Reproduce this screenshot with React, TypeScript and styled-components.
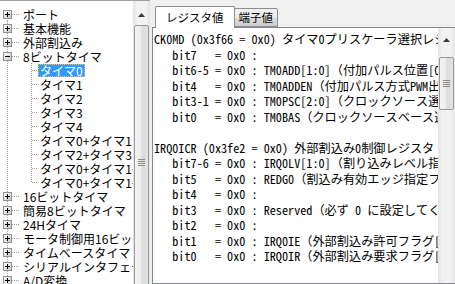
import React from "react";
import styled, { createGlobalStyle } from "styled-components";

const Global = createGlobalStyle`
  html, body { margin: 0; padding: 0; background: #f0f0f0; overflow: hidden; }
  #root { width: 455px; height: 284px; }
`;

const Frame = styled.div`
  width: 455px;
  height: 284px;
  display: flex;
  overflow: hidden;
  background: #f0f0f0;
`;

const TreePane = styled.div`
  width: 150px;
  height: 284px;
  flex: none;
  display: flex;
  background: #fff;
  border-top: 1px solid #a0a0a0;
  box-sizing: border-box;
  overflow: hidden;
`;

const TreeBody = styled.div`
  flex: 1;
  min-width: 0;
  padding-top: 6px;
  overflow: hidden;
  font-family: "Noto Sans CJK JP", sans-serif;
  font-size: 12px;
  color: #000;
`;

const Row = styled.div`
  height: 14px;
  display: flex;
  align-items: center;
  white-space: nowrap;
`;

const Label = styled.span<{ $sel?: boolean }>`
  height: 13px;
  line-height: 13px;
  padding: 0 2px;
  box-sizing: border-box;
  background: ${(p) => (p.$sel ? "#3399ff" : "transparent")};
  color: ${(p) => (p.$sel ? "#fff" : "#000")};
  outline: ${(p) => (p.$sel ? "1px dotted #f0c060" : "none")};
  outline-offset: -1px;
`;

const ScrollBar = styled.div`
  width: 17px;
  flex: none;
  display: flex;
  flex-direction: column;
  background: linear-gradient(to right, #e3e3e3, #f2f2f2 25%, #f2f2f2 75%, #e3e3e3);
  overflow: hidden;
`;

const ArrowBtn = styled.div<{ $h: number; $pt: number }>`
  height: ${(p) => p.$h}px;
  padding-top: ${(p) => p.$pt}px;
  box-sizing: border-box;
  flex: none;
  display: flex;
  align-items: flex-start;
  justify-content: center;
`;

const Thumb = styled.div<{ $h: number }>`
  flex: none;
  margin: 0 1px;
  height: ${(p) => p.$h}px;
  border: 1px solid #9a9a9a;
  border-radius: 2px;
  box-sizing: border-box;
  background: linear-gradient(to right, #f4f4f4, #ececec 45%, #dcdcdc 55%, #e2e2e2);
  display: flex;
  align-items: center;
  justify-content: center;
`;

const Splitter = styled.div`
  width: 2px;
  flex: none;
  background: #f0f0f0;
`;

const RightPane = styled.div`
  flex: 1;
  min-width: 0;
  display: flex;
  flex-direction: column;
`;

const TabStrip = styled.div`
  height: 27px;
  flex: none;
  display: flex;
  align-items: flex-end;
  padding-left: 3px;
  position: relative;
  z-index: 1;
`;

const Tab = styled.div<{ $active?: boolean }>`
  height: ${(p) => (p.$active ? 22 : 19)}px;
  margin-bottom: ${(p) => (p.$active ? -1 : 0)}px;
  padding: 0 ${(p) => (p.$active ? 10 : 4)}px;
  border: 1px solid #898c95;
  border-bottom: ${(p) => (p.$active ? "none" : "1px solid #898c95")};
  margin-left: ${(p) => (p.$active ? 0 : -1)}px;
  border-radius: 2px 2px 0 0;
  box-sizing: border-box;
  background: ${(p) =>
    p.$active ? "#ffffff" : "linear-gradient(to bottom, #f2f2f2, #ebebeb 50%, #dddddd 51%, #cfcfcf)"};
  font-family: "Noto Sans CJK JP", sans-serif;
  font-size: 11.5px;
  line-height: ${(p) => (p.$active ? 20 : 17)}px;
  color: #000;
`;

const Page = styled.div`
  flex: 1;
  display: flex;
  border: 1px solid #828790;
  border-right: none;
  background: #fff;
  min-height: 0;
`;

const TextArea = styled.div`
  flex: 1;
  min-width: 0;
  overflow: hidden;
  padding: 4px 0 0 1px;
  font-family: "Noto Sans Mono CJK JP", "Liberation Mono", "Noto Sans CJK JP", monospace;
  font-size: 12.2px;
  line-height: 15.5px;
  white-space: pre;
  color: #000;
`;

const Line = styled.div`
  height: 15.5px;
`;

type Node = { label: string; level: number; exp?: "+" | "-"; sel?: boolean; last?: boolean; first?: boolean };

const nodes: Node[] = [
  { label: "ポート", level: 0, exp: "+", first: true },
  { label: "基本機能", level: 0, exp: "+" },
  { label: "外部割込み", level: 0, exp: "+" },
  { label: "8ビットタイマ", level: 0, exp: "-" },
  { label: "タイマ0", level: 1, sel: true },
  { label: "タイマ1", level: 1 },
  { label: "タイマ2", level: 1 },
  { label: "タイマ3", level: 1 },
  { label: "タイマ4", level: 1 },
  { label: "タイマ0+タイマ1", level: 1 },
  { label: "タイマ2+タイマ3", level: 1 },
  { label: "タイマ0+タイマ1+タイマ2", level: 1 },
  { label: "タイマ0+タイマ1+タイマ2+タイマ3", level: 1, last: true },
  { label: "16ビットタイマ", level: 0, exp: "+" },
  { label: "簡易8ビットタイマ", level: 0, exp: "+" },
  { label: "24Hタイマ", level: 0, exp: "+" },
  { label: "モータ制御用16ビットタイマ", level: 0, exp: "+" },
  { label: "タイムベースタイマ", level: 0, exp: "+" },
  { label: "シリアルインタフェース", level: 0, exp: "+" },
  { label: "A/D変換", level: 0, exp: "+" },
];

const DOT = "#a0a0a0";

function Connector({ n }: { n: Node }) {
  const w = n.level === 0 ? 21 : 38;
  return (
    <svg width={w} height={14} style={{ flex: "none" }} shapeRendering="crispEdges">
      <defs>
        <linearGradient id="bx" x1="0" y1="0" x2="1" y2="1">
          <stop offset="0" stopColor="#ffffff" />
          <stop offset="1" stopColor="#c6c6c6" />
        </linearGradient>
      </defs>
      <line x1={7.5} y1={n.first ? 7 : 0} x2={7.5} y2={14} stroke={DOT} strokeDasharray="1 1" />
      {n.level === 0 ? (
        <>
          <line x1={12} y1={7.5} x2={20} y2={7.5} stroke={DOT} strokeDasharray="1 1" />
          <rect x={3.5} y={3.5} width={8} height={8} fill="url(#bx)" stroke="#919191" />
          <line x1={5} y1={7.5} x2={10} y2={7.5} stroke="#000" />
          {n.exp === "+" && <line x1={7.5} y1={5} x2={7.5} y2={10} stroke="#000" />}
        </>
      ) : (
        <>
          <line x1={31.5} y1={0} x2={31.5} y2={n.last ? 8 : 14} stroke={DOT} strokeDasharray="1 1" />
          <line x1={32} y1={7.5} x2={37} y2={7.5} stroke={DOT} strokeDasharray="1 1" />
        </>
      )}
    </svg>
  );
}

function VScroll({ btnH, arrowTop, thumbH }: { btnH: number; arrowTop: number; thumbH: number }) {
  return (
    <ScrollBar>
      <ArrowBtn $h={btnH} $pt={arrowTop}>
        <svg width="7" height="4" viewBox="0 0 7 4">
          <path d="M0 4 L3.5 0 L7 4 Z" fill="#3a3a3a" />
        </svg>
      </ArrowBtn>
      <Thumb $h={thumbH}>
        <svg width="7" height="7" viewBox="0 0 7 7" shapeRendering="crispEdges">
          <rect x="0" y="0" width="7" height="1" fill="#8b8b8b" />
          <rect x="0" y="2" width="7" height="1" fill="#8b8b8b" />
          <rect x="0" y="4" width="7" height="1" fill="#8b8b8b" />
          <rect x="0" y="6" width="7" height="1" fill="#8b8b8b" />
        </svg>
      </Thumb>
    </ScrollBar>
  );
}

const lines = [
  "CK0MD (0x3f66 = 0x0) タイマ0プリスケーラ選択レジスタ",
  "   bit7   = 0x0 :",
  "   bit6-5 = 0x0 : TM0ADD[1:0]（付加パルス位置[0]）",
  "   bit4   = 0x0 : TM0ADDEN（付加パルス方式PWM出力）",
  "   bit3-1 = 0x0 : TM0PSC[2:0]（クロックソース選択）",
  "   bit0   = 0x0 : TM0BAS（クロックソースベース選択）",
  "",
  "IRQ0ICR (0x3fe2 = 0x0) 外部割込み0制御レジスタ",
  "   bit7-6 = 0x0 : IRQ0LV[1:0]（割り込みレベル指定）",
  "   bit5   = 0x0 : REDG0（割込み有効エッジ指定フラグ）",
  "   bit4   = 0x0 :",
  "   bit3   = 0x0 : Reserved（必ず 0 に設定してください）",
  "   bit2   = 0x0 :",
  "   bit1   = 0x0 : IRQ0IE（外部割込み許可フラグ[0]）",
  "   bit0   = 0x0 : IRQ0IR（外部割込み要求フラグ[0]）",
];

export default function App() {
  return (
    <>
      <Global />
      <Frame>
        <TreePane>
          <TreeBody>
            {nodes.map((n, i) => (
              <Row key={i}>
                <Connector n={n} />
                <Label $sel={n.sel}>{n.label}</Label>
              </Row>
            ))}
          </TreeBody>
          <VScroll btnH={24} arrowTop={12} thumbH={274} />
        </TreePane>
        <Splitter />
        <RightPane>
          <TabStrip>
            <Tab $active>レジスタ値</Tab>
            <Tab>端子値</Tab>
          </TabStrip>
          <Page>
            <TextArea>
              {lines.map((l, i) => (
                <Line key={i}>{l}</Line>
              ))}
            </TextArea>
            <VScroll btnH={29} arrowTop={10} thumbH={53} />
          </Page>
        </RightPane>
      </Frame>
    </>
  );
}
